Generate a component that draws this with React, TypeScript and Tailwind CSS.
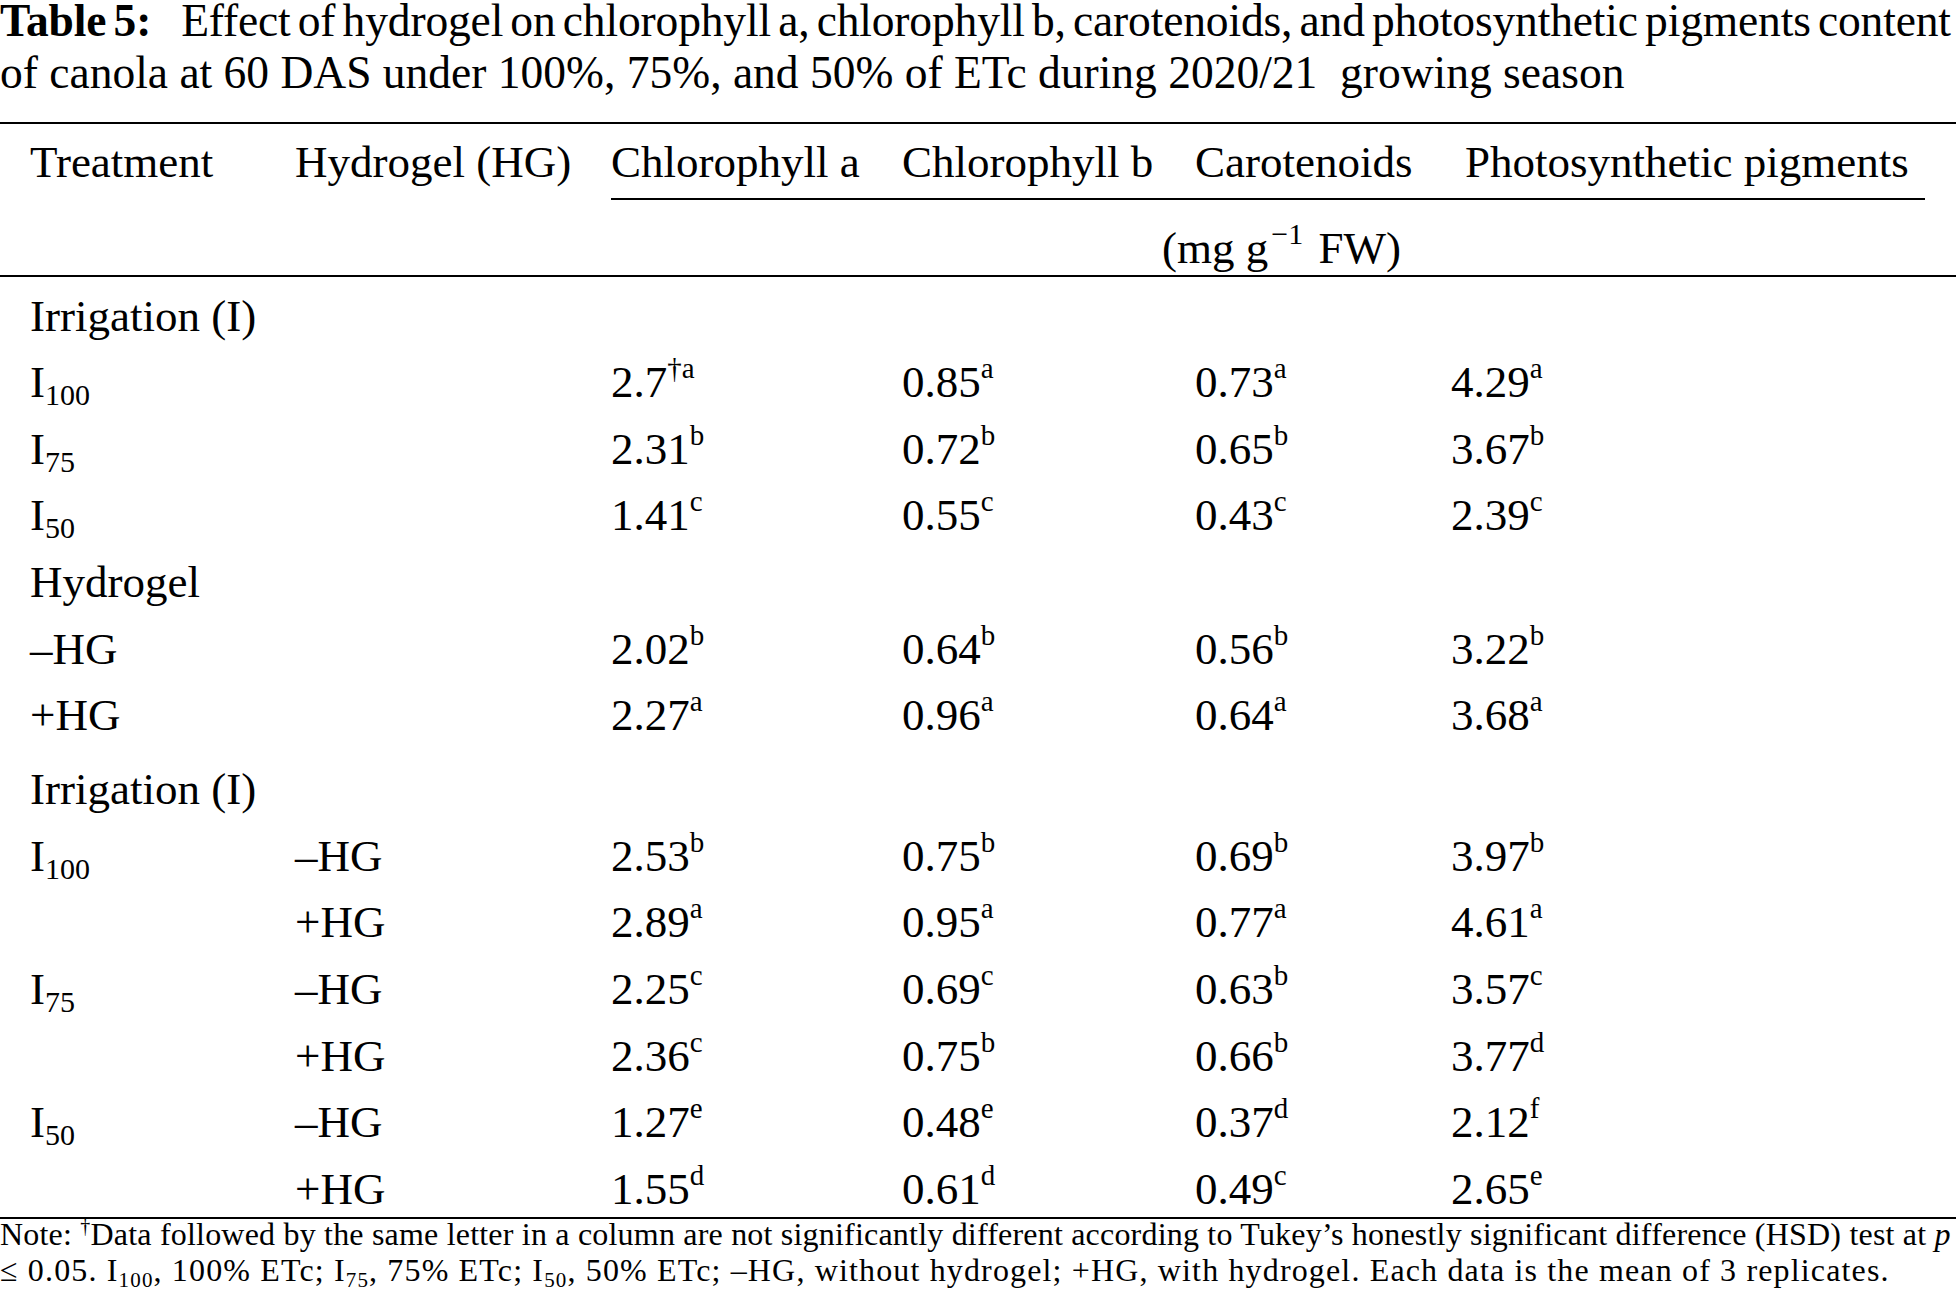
import React from "react";

type Row = {
  label?: React.ReactNode;
  hg?: string;
  values?: [string, string][];
  heading?: string;
  gapBefore?: boolean;
};

const I = ({ n }: { n: string }) => (
  <span>
    I<span className="relative top-[8px] text-[30px] leading-none">{n}</span>
  </span>
);

const rows: Row[] = [
  { heading: "Irrigation (I)" },
  { label: <I n="100" />, values: [["2.7", "†a"], ["0.85", "a"], ["0.73", "a"], ["4.29", "a"]] },
  { label: <I n="75" />, values: [["2.31", "b"], ["0.72", "b"], ["0.65", "b"], ["3.67", "b"]] },
  { label: <I n="50" />, values: [["1.41", "c"], ["0.55", "c"], ["0.43", "c"], ["2.39", "c"]] },
  { heading: "Hydrogel" },
  { label: "–HG", values: [["2.02", "b"], ["0.64", "b"], ["0.56", "b"], ["3.22", "b"]] },
  { label: "+HG", values: [["2.27", "a"], ["0.96", "a"], ["0.64", "a"], ["3.68", "a"]] },
  { heading: "Irrigation (I)", gapBefore: true },
  { label: <I n="100" />, hg: "–HG", values: [["2.53", "b"], ["0.75", "b"], ["0.69", "b"], ["3.97", "b"]] },
  { hg: "+HG", values: [["2.89", "a"], ["0.95", "a"], ["0.77", "a"], ["4.61", "a"]] },
  { label: <I n="75" />, hg: "–HG", values: [["2.25", "c"], ["0.69", "c"], ["0.63", "b"], ["3.57", "c"]] },
  { hg: "+HG", values: [["2.36", "c"], ["0.75", "b"], ["0.66", "b"], ["3.77", "d"]] },
  { label: <I n="50" />, hg: "–HG", values: [["1.27", "e"], ["0.48", "e"], ["0.37", "d"], ["2.12", "f"]] },
  { hg: "+HG", values: [["1.55", "d"], ["0.61", "d"], ["0.49", "c"], ["2.65", "e"]] },
];

const Val = ({ v }: { v: [string, string] }) => (
  <span>
    {v[0]}
    <span className="relative -top-[19px] text-[29px] leading-none">{v[1]}</span>
  </span>
);

export default function App() {
  return (
    <div className="w-[1956px] h-[1302px] bg-white text-black font-['Liberation_Serif',serif] overflow-hidden">
      {/* caption */}
      <div className="text-[45.5px] whitespace-nowrap">
        <div className="leading-[42px] [word-spacing:-4px] tracking-[-0.15px]">
          <span className="font-bold">Table 5:</span>
          <span className="ml-[30px]">
            Effect of hydrogel on chlorophyll a, chlorophyll b, carotenoids, and photosynthetic pigments content
          </span>
        </div>
        <div className="leading-[62px]">
          of canola at 60 DAS under 100%, 75%, and 50% of ETc during 2020/21&nbsp; growing season
        </div>
      </div>

      <div className="mt-[18px] h-[2px] bg-black" />

      {/* header */}
      <div className="text-[45px] whitespace-nowrap">
        <div className="grid grid-cols-[30px_265px_316px_1fr] pt-[5px]">
          <div />
          <div className="leading-[66px]">Treatment</div>
          <div className="leading-[66px]">Hydrogel (HG)</div>
          <div className="mr-[31px] border-b-2 border-black pb-[3px] grid grid-cols-[291px_293px_256px_1fr] leading-[66px]">
            <div>Chlorophyll a</div>
            <div>Chlorophyll b</div>
            <div>Carotenoids</div>
            <div className="pl-[14px]">Photosynthetic pigments</div>
          </div>
        </div>
        <div className="pt-[21px] leading-[54px] pl-[1162px]">
          (mg g<span className="relative -top-[19px] ml-[3px] mr-[4px] text-[30px] leading-none">−1</span> FW)
        </div>
      </div>

      <div className="h-[2px] bg-black" />

      {/* body */}
      <div className="text-[45px] whitespace-nowrap">
        {rows.map((r, i) => (
          <div
            key={i}
            className={
              "grid grid-cols-[30px_265px_316px_291px_293px_256px_1fr] h-[66.67px] pt-[10.5px] leading-[56px]" +
              (r.gapBefore ? " mt-[7px]" : "")
            }
          >
            <div />
            {r.heading ? (
              <div className="col-span-6">{r.heading}</div>
            ) : (
              <>
                <div>{r.label}</div>
                <div>{r.hg}</div>
                {r.values!.map((v, j) => (
                  <div key={j}>
                    <Val v={v} />
                  </div>
                ))}
              </>
            )}
          </div>
        ))}
      </div>

      <div className="h-[2px] bg-black" />

      {/* note */}
      <div className="text-[32px] whitespace-nowrap">
        <div className="leading-[30px] tracking-[0.2px]">
          Note: <span className="relative -top-[12px] text-[20px] leading-none">†</span>Data followed by the same letter in a
          column are not significantly different according to Tukey’s honestly significant difference (HSD) test at{" "}
          <span className="italic">p</span>
        </div>
        <div className="leading-[42px] tracking-[1.15px]">
          ≤ 0.05. I<span className="relative top-[6px] text-[21px] leading-none">100</span>, 100% ETc; I
          <span className="relative top-[6px] text-[21px] leading-none">75</span>, 75% ETc; I
          <span className="relative top-[6px] text-[21px] leading-none">50</span>, 50% ETc; –HG, without hydrogel; +HG, with
          hydrogel. Each data is the mean of 3 replicates.
        </div>
      </div>
    </div>
  );
}
